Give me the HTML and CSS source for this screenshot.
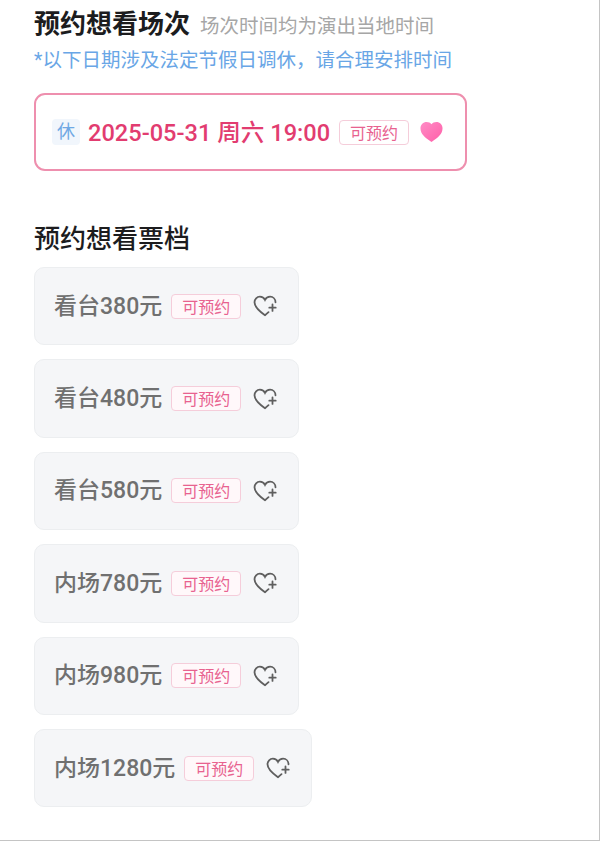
FILE: index.html
```html
<!DOCTYPE html>
<html lang="zh-CN">
<head>
    <meta charset="UTF-8">
    <meta name="viewport" content="width=device-width, initial-scale=1.0">
    <title>预约想看</title>
    <link rel="stylesheet" href="styles.css">
</head>
<body>

<svg class="defs" width="0" height="0">
    <defs>
        <linearGradient id="heart-fill" x1="0" y1="0" x2="1" y2="1">
            <stop offset="0" stop-color="#ff8cc6"/>
            <stop offset="1" stop-color="#ff5fa8"/>
        </linearGradient>
        <g id="heart-plus">
            <path d="M15.500 17.200C14.400 18.200 13.300 19.200 12 20.200 6 16 1.500 12.200 1.500 7.300 1.500 4 4 1.700 6.900 1.700c2.200 0 4.100 1.200 5.100 3.200 1-2 2.900-3.200 5.100-3.200 3 0 5.400 2.300 5.400 5.600"/>
            <path class="plus" d="M19.500 9.500v6.400M16.300 12.700h6.400"/>
        </g>
    </defs>
</svg>

<div class="page">
    <div class="title-row">
        <h2 class="title">预约想看场次</h2>
        <span class="subtitle">场次时间均为演出当地时间</span>
    </div>
    <p class="notice">*以下日期涉及法定节假日调休，请合理安排时间</p>

    <div class="session">
        <span class="rest">休</span>
        <span class="session-time">2025-05-31 周六 19:00</span>
        <span class="tag">可预约</span>
        <svg class="heart-on" viewBox="0 0 24 22"><path d="M12 21.500C5 17 .5 13 .5 7.200.5 3.200 3.400.5 6.900.5c2.100 0 3.900 .8 5.100 2.300C13.200 1.300 15 .5 17.100 .5c3.500 0 6.400 2.700 6.400 6.700C23.500 13 19 17 12 21.500z" fill="url(#heart-fill)"/></svg>
    </div>

    <h2 class="title title-tickets">预约想看票档</h2>

    <div class="tickets">
        <div class="ticket">
            <span class="ticket-name">看台380元</span>
            <span class="tag">可预约</span>
            <svg class="heart-add" viewBox="0 0 24 22"><use href="#heart-plus"/></svg>
        </div>
        <div class="ticket">
            <span class="ticket-name">看台480元</span>
            <span class="tag">可预约</span>
            <svg class="heart-add" viewBox="0 0 24 22"><use href="#heart-plus"/></svg>
        </div>
        <div class="ticket">
            <span class="ticket-name">看台580元</span>
            <span class="tag">可预约</span>
            <svg class="heart-add" viewBox="0 0 24 22"><use href="#heart-plus"/></svg>
        </div>
        <div class="ticket">
            <span class="ticket-name">内场780元</span>
            <span class="tag">可预约</span>
            <svg class="heart-add" viewBox="0 0 24 22"><use href="#heart-plus"/></svg>
        </div>
        <div class="ticket">
            <span class="ticket-name">内场980元</span>
            <span class="tag">可预约</span>
            <svg class="heart-add" viewBox="0 0 24 22"><use href="#heart-plus"/></svg>
        </div>
        <div class="ticket">
            <span class="ticket-name">内场1280元</span>
            <span class="tag">可预约</span>
            <svg class="heart-add" viewBox="0 0 24 22"><use href="#heart-plus"/></svg>
        </div>
    </div>
</div>

</body>
</html>
```

FILE: styles.css
```css
body {
    font-family: 'Roboto', 'Noto Sans CJK SC', sans-serif;
    margin: 0;
    background-color: #fff;
}

.defs {
    display: block;
}

.page {
    box-sizing: border-box;
    width: 600px;
    height: 841px;
    padding: 8px 0 0 34px;
    border-right: 1px solid #c4c4c4;
    border-bottom: 1px solid #c4c4c4;
    overflow: hidden;
}

.title-row {
    display: flex;
    align-items: center;
    gap: 10px;
    height: 32px;
}

.title {
    margin: 0;
    font-size: 26px;
    line-height: 32px;
    font-weight: 700;
    color: #1c1c1e;
    white-space: nowrap;
}

.subtitle {
    font-size: 19.500px;
    color: #a6a6a6;
    white-space: nowrap;
}

.notice {
    margin: 7px 0 0;
    font-size: 19.500px;
    line-height: 28px;
    color: #69a6e6;
    white-space: nowrap;
}

.session {
    box-sizing: border-box;
    display: flex;
    align-items: center;
    width: 433px;
    height: 78px;
    margin-top: 18px;
    padding-left: 16px;
    border: 2px solid #ee8fae;
    border-radius: 11px;
}

.rest {
    width: 28px;
    height: 26px;
    line-height: 26px;
    text-align: center;
    font-size: 18px;
    color: #6fa8e4;
    background-color: #f1f6fc;
    border-radius: 4px;
}

.session-time {
    margin-left: 8px;
    padding-bottom: 3px;
    font-size: 23.600px;
    font-weight: 500;
    color: #e23c70;
    white-space: nowrap;
}

.session .tag {
    margin-left: 9px;
    background-color: #fff;
}

.heart-on {
    width: 23px;
    height: 22px;
    margin-left: 11px;
}

.title-tickets {
    margin-top: 52px;
    font-weight: 500;
}

.tickets {
    display: flex;
    flex-direction: column;
    align-items: flex-start;
    gap: 14px;
    margin-top: 12px;
}

.ticket {
    box-sizing: border-box;
    display: flex;
    align-items: center;
    height: 78.400px;
    padding: 0 21px 0 19px;
    background-color: #f5f6f8;
    border: 1px solid #eceef0;
    border-radius: 10px;
}

.ticket-name {
    padding-bottom: 5px;
    font-size: 23px;
    font-weight: 500;
    color: #707070;
    white-space: nowrap;
}

.tag {
    box-sizing: border-box;
    width: 70px;
    height: 25px;
    line-height: 25px;
    text-align: center;
    font-size: 16px;
    color: #e8628f;
    border: 1px solid #f5cdda;
    border-radius: 4px;
    background-color: #fff8fa;
    white-space: nowrap;
}

.ticket .tag {
    margin-left: 9px;
}

.heart-add {
    width: 24px;
    height: 22px;
    margin-left: 12px;
    fill: none;
    stroke: #5f5f5f;
    stroke-width: 1.800;
    stroke-linecap: round;
}

.heart-add .plus {
    stroke-width: 1.600;
}
```
